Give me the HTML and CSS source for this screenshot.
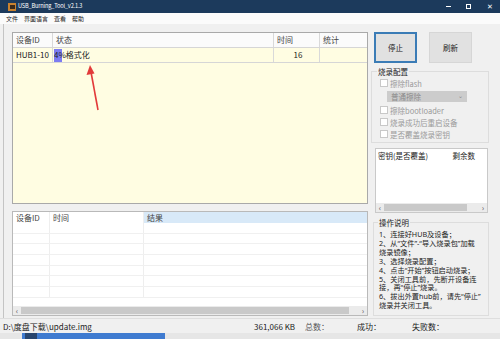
FILE: index.html
```html
<!DOCTYPE html>
<html lang="zh-CN">
<head>
  <meta charset="UTF-8">
  <title>USB_Burning_Tool_v2.1.3</title>
  <link rel="stylesheet" href="styles.css">
</head>
<body>

  <div class="titlebar">
    <span class="app-icon"><span></span></span>
    <span class="title">USB_Burning_Tool_v2.1.3</span>
    <div class="win-controls">
      <span class="ctl-min"></span>
      <span class="ctl-max"></span>
      <span class="ctl-close">✕</span>
    </div>
  </div>

  <div class="menubar">
    <span>文件</span>
    <span>界面语言</span>
    <span>查看</span>
    <span>帮助</span>
  </div>

  <div class="main">
    <div class="left">
      <div class="dev-table">
        <div class="dev-row dev-head">
          <div class="c-id">设备ID</div>
          <div class="c-state">状态</div>
          <div class="c-time">时间</div>
          <div class="c-stat">统计</div>
        </div>
        <div class="dev-row">
          <div class="c-id">HUB1-10</div>
          <div class="c-state"><span class="progress" style="width:8px"></span><span class="pct">4%</span> 格式化</div>
          <div class="c-time num">16</div>
          <div class="c-stat"></div>
        </div>
      </div>

      <div class="log-table">
        <div class="log-row log-head">
          <div class="l-id">设备ID</div>
          <div class="l-time">时间</div>
          <div class="l-res selected">结果</div>
        </div>
        <div class="log-body">
          <div class="log-row"><div class="l-id"></div><div class="l-time"></div><div class="l-res"></div></div>
          <div class="log-row"><div class="l-id"></div><div class="l-time"></div><div class="l-res"></div></div>
          <div class="log-row"><div class="l-id"></div><div class="l-time"></div><div class="l-res"></div></div>
          <div class="log-row"><div class="l-id"></div><div class="l-time"></div><div class="l-res"></div></div>
          <div class="log-row"><div class="l-id"></div><div class="l-time"></div><div class="l-res"></div></div>
          <div class="log-row"><div class="l-id"></div><div class="l-time"></div><div class="l-res"></div></div>
          <div class="log-row"><div class="l-id"></div><div class="l-time"></div><div class="l-res"></div></div>
        </div>
        <div class="hscroll">
          <div class="arr">‹</div>
          <div class="track"><div class="thumb thumb-log"></div></div>
          <div class="arr">›</div>
        </div>
      </div>
    </div>

    <div class="right">
      <div class="btn-row">
        <button class="btn focused">停止</button>
        <button class="btn">刷新</button>
      </div>

      <fieldset class="group config">
        <legend>烧录配置</legend>
        <label class="check"><span class="box"></span>擦除flash</label>
        <div class="combo">普通擦除<span class="combo-arrow">⌄</span></div>
        <label class="check"><span class="box"></span>擦除bootloader</label>
        <label class="check"><span class="box"></span>烧录成功后重启设备</label>
        <label class="check"><span class="box"></span>是否覆盖烧录密钥</label>
      </fieldset>

      <div class="key-list">
        <div class="key-head">
          <span>密钥(是否覆盖)</span>
          <span class="key-left">剩余数</span>
        </div>
        <div class="key-body"></div>
        <div class="hscroll">
          <div class="arr">‹</div>
          <div class="track"><div class="thumb thumb-key"></div></div>
          <div class="arr">›</div>
        </div>
      </div>

      <fieldset class="group help">
        <legend>操作说明</legend>
        <p>
          1、连接好HUB及设备；<br>
          2、从“文件”-“导入烧录包”加载<br>
          烧录镜像；<br>
          3、选择烧录配置；<br>
          4、点击“开始”按钮启动烧录；<br>
          5、关闭工具前，先断开设备连<br>
          接，再“停止”烧录。<br>
          6、拔出外置hub前，请先“停止”<br>
          烧录并关闭工具。
        </p>
      </fieldset>
    </div>
  </div>

  <div class="statusbar">
    <span class="s-path">D:\度盘下载\update.img</span>
    <span class="s-size">361,066 KB</span>
    <span class="s-total">总数：</span>
    <span class="s-ok">成功：</span>
    <span class="s-fail">失败数：</span>
  </div>

  <div class="taskstrip">
    <span class="task"><span class="task-icon"></span></span>
  </div>

  <!-- red annotation arrow drawn over the table -->
  <svg class="annot" width="40" height="60" viewBox="0 0 40 60">
    <line x1="28" y1="50" x2="21" y2="12" stroke="#e23a3a" stroke-width="1.6"/>
    <polygon points="20,5 16.5,15 24.5,13.6" fill="#e23a3a"/>
  </svg>

</body>
</html>
```

FILE: styles.css
```css
body {
  margin: 0;
  width: 500px;
  height: 339px;
  overflow: hidden;
  position: relative;
  background-color: #f0f0f0;
  font-family: "Noto Sans CJK SC", "Noto Sans", sans-serif;
  color: #222;
}

/* title bar */
.titlebar {
  height: 13px;
  background-color: #1c3a5c;
  display: flex;
  align-items: center;
  padding-left: 8px;
  color: #fff;
  font-size: 5.6px;
}
.app-icon {
  width: 8px;
  height: 8px;
  background-color: #c9822f;
  display: flex;
  align-items: center;
  justify-content: center;
}
.app-icon span {
  width: 5px;
  height: 4px;
  background-color: #3b2a1a;
}
.title {
  margin-left: 2px;
  line-height: 13px;
  letter-spacing: -0.15px;
}
.win-controls {
  margin-left: auto;
  display: flex;
  align-items: center;
  height: 13px;
}
.ctl-min {
  width: 5px;
  height: 1px;
  background: #fff;
  margin-right: 15px;
}
.ctl-max {
  width: 5px;
  height: 5px;
  border: 1px solid #fff;
  box-sizing: border-box;
  margin-right: 16px;
}
.ctl-close {
  font-size: 7px;
  width: 13px;
  line-height: 13px;
}

/* menu */
.menubar {
  height: 11px;
  background-color: #fbfbfb;
  display: flex;
  align-items: center;
  padding-left: 6px;
  font-size: 6px;
  gap: 6px;
}

/* main area */
.main {
  display: flex;
  height: 294px;
}
.left {
  margin-left: 3px;
  width: 365px;
  border-left: 1px solid #c4c4c4;
  padding: 8px 0 0 8px;
  box-sizing: border-box;
  display: flex;
  flex-direction: column;
  gap: 7px;
}

.dev-table {
  height: 172px;
  width: 356px;
  border: 1px solid #a9a9a9;
  box-sizing: border-box;
  background-color: #fffde2;
  font-size: 8px;
}
.dev-row {
  display: flex;
  height: 15px;
  border-bottom: 1px solid #d6d6d6;
  box-sizing: border-box;
}
.dev-row > div {
  border-right: 1px solid #d9d9d9;
  box-sizing: border-box;
  padding-left: 3px;
  line-height: 14px;
  display: flex;
  align-items: center;
  white-space: nowrap;
}
.dev-head {
  background-color: #fbfbfb;
  color: #444;
}
.c-id { width: 40px; }
.c-state { width: 221px; padding-left: 1px !important; }
.c-time { width: 46px; }
.c-stat { width: 47px; border-right: none !important; }
.num {
  justify-content: center;
}
.dev-head .c-state { padding-left: 3px !important; }
.progress {
  display: inline-block;
  height: 13px;
  background-color: #7c7cf2;
}
.pct {
  margin-left: -8px;
}

.log-table {
  height: 105px;
  width: 356px;
  border: 1px solid #b9b9b9;
  box-sizing: border-box;
  background-color: #fff;
  font-size: 8px;
  display: flex;
  flex-direction: column;
}
.log-row {
  display: flex;
  height: 10.7px;
  border-bottom: 1px solid #f0f0f0;
  box-sizing: border-box;
}
.log-row > div {
  border-right: 1px solid #eeeeee;
  box-sizing: border-box;
  padding-left: 3px;
}
.log-head {
  height: 11px;
  line-height: 11px;
  color: #444;
  border-bottom: none;
}
.l-id { width: 37px; }
.l-time { width: 94px; }
.l-res { flex: 1; border-right: none !important; }
.selected { background-color: #d8e9f8; }
.log-body {
  flex: 1 1 auto;
  min-height: 0;
  overflow: hidden;
}

/* horizontal scrollbar */
.hscroll {
  height: 9px;
  flex: 0 0 9px;
  display: grid;
  grid-template-columns: 8px 1fr 8px;
  align-items: center;
  background-color: #ebebeb;
  font-size: 8px;
  color: #555;
}
.hscroll .arr {
  text-align: center;
  line-height: 9px;
  height: 9px;
}
.hscroll .track {
  height: 7px;
}
.thumb {
  height: 7px;
  background-color: #c9c9c9;
}
.thumb-log { width: 328px; }
.thumb-key { width: 83px; }

/* right column */
.right {
  margin-left: 5px;
  width: 116px;
  padding-top: 8px;
  display: flex;
  flex-direction: column;
  font-size: 7.5px;
}
.btn-row {
  display: flex;
  gap: 12px;
  padding-left: 1px;
}
.btn {
  width: 43px;
  height: 31px;
  background-color: #e1e1e1;
  border: 1px solid #d6d6d6;
  font-family: inherit;
  font-size: 7.5px;
  color: #222;
  padding: 0;
}
.btn.focused {
  border: 2px solid #3b7cb6;
}

.group {
  margin: 0;
  border: 1px solid #dddddd;
  padding: 0 0 0 6px;
}
.group legend {
  padding: 0 1px;
  margin-left: -1px;
  color: #222;
  line-height: 9px;
}
.config {
  margin-top: 4px;
  margin-left: -2px;
  height: 76px;
  box-sizing: border-box;
  padding-top: 1px;
}
.check {
  display: flex;
  align-items: center;
  height: 12px;
  color: #9a9a9a;
  margin-left: 2px;
}
.box {
  width: 6px;
  height: 6px;
  border: 1px solid #c8c8c8;
  background: #fff;
  margin-right: 2px;
}
.combo {
  margin: 2px 0 2px 9px;
  width: 80px;
  height: 11px;
  background-color: #cccccc;
  color: #8a8a8a;
  padding-left: 4px;
  box-sizing: border-box;
  line-height: 11px;
  display: flex;
}
.combo-arrow {
  margin-left: auto;
  margin-right: 4px;
  font-size: 6px;
  line-height: 9px;
}

.key-list {
  margin-top: 5px;
  margin-left: 2px;
  height: 65px;
  width: 113px;
  border: 1px solid #c9c9c9;
  box-sizing: border-box;
  background-color: #fff;
  display: flex;
  flex-direction: column;
}
.key-head {
  display: flex;
  height: 12px;
  line-height: 13px;
  padding-left: 2px;
}
.key-left {
  margin-left: auto;
  margin-right: 12px;
}
.key-body {
  flex: 1 1 auto;
}

.help {
  margin-top: 5px;
  height: 98px;
  width: 116px;
  box-sizing: border-box;
}
.help legend {
  margin-left: -2px;
}
.help p {
  margin: 3px 0 0 -1px;
  font-family: "Noto Sans", "Noto Sans CJK SC", sans-serif;
  font-size: 7.2px;
  line-height: 8.9px;
  white-space: nowrap;
}

/* status bar */
.statusbar {
  height: 15px;
  display: flex;
  align-items: center;
  font-size: 8px;
  color: #222;
  border-top: 1px solid #dedede;
  box-sizing: border-box;
}
.s-path { margin-left: 3px; width: 251px; }
.s-size { width: 51px; }
.s-total { width: 52px; color: #555; }
.s-ok { width: 55px; }

.taskstrip {
  height: 6px;
  background-color: #e6e6e6;
  display: flex;
}
.task {
  margin-left: 22px;
  width: 143px;
  background-color: #3f7bd0;
  display: flex;
}
.task-icon {
  margin-left: 3px;
  width: 12px;
  background-color: #27456e;
}

.annot {
  position: absolute;
  left: 70px;
  top: 60px;
}
```
